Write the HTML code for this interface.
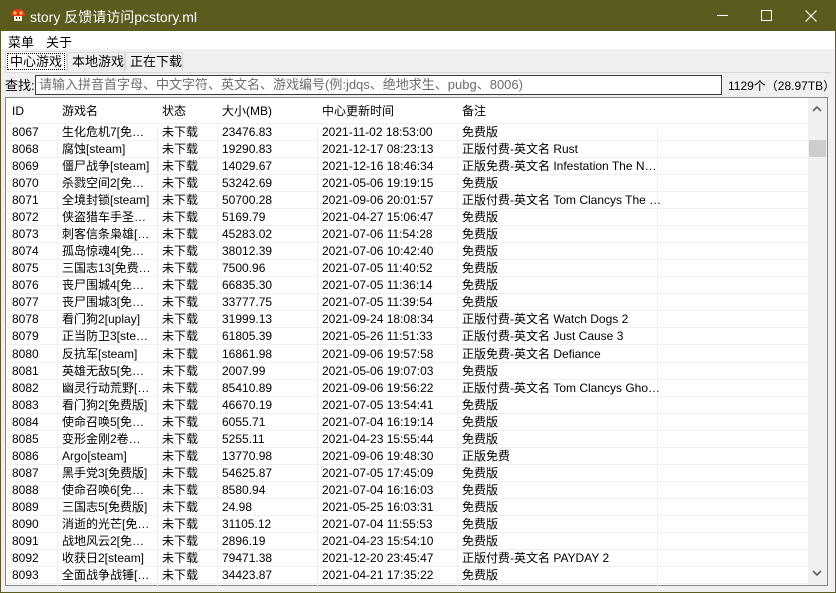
<!DOCTYPE html>
<html><head><meta charset="utf-8"><style>
*{margin:0;padding:0;box-sizing:border-box}
body{width:836px;height:593px;background:#f0f0f0;font-family:"Liberation Sans","Noto Sans CJK SC",sans-serif;font-size:12px;color:#000;position:relative;overflow:hidden}
.abs{position:absolute}
#title{left:0;top:0;width:836px;height:31px;background:#5b5a1f;color:#fff;font-size:14px}
#menu{left:1px;top:31px;width:834px;height:18px;background:#fff}
.tab{top:52px;height:19px;border:1px solid #d9d9d9;border-bottom:none;background:#f0f0f0;font-size:13px;line-height:18px;padding-left:4px;white-space:nowrap;overflow:hidden}
#list{left:5px;top:97px;width:823px;height:489px;background:#fff;border:1px solid #828790}
.r{position:absolute;left:0;width:802px;height:17px;border-bottom:1px solid #f0f0f0;line-height:17px}
.r span{position:absolute;top:0;white-space:nowrap}
.c1{left:6px}.c2{left:56px}.c3{left:156px}.c4{left:216px}.c5{left:316px}.c6{left:456px}
.v{position:absolute;top:0;width:1px;height:488px;background:#f0f0f0}
</style></head><body>
<div class="abs" style="left:0;top:31px;width:1px;height:562px;background:#5b5a1f"></div>
<div class="abs" style="left:835px;top:31px;width:1px;height:562px;background:#5b5a1f"></div>
<div class="abs" style="left:0;top:592px;width:836px;height:1px;background:#5b5a1f"></div>
<div class="abs" id="title">
<svg class="abs" style="left:10px;top:8px" width="16" height="15" viewBox="0 0 16 15"><path d="M1 8 Q1 1 8 1 Q15 1 15 8 Z" fill="#e23a1a"/><circle cx="5" cy="5" r="1.6" fill="#f6c04a"/><circle cx="11" cy="5" r="1.6" fill="#f6c04a"/><rect x="4" y="8" width="8" height="5" fill="#f3ead2"/><rect x="6" y="9" width="1" height="2" fill="#333"/><rect x="9" y="9" width="1" height="2" fill="#333"/></svg>
<div class="abs" style="left:30px;top:7px">story 反馈请访问pcstory.ml</div>
<div class="abs" style="left:717px;top:15px;width:11px;height:1px;background:#fff"></div>
<div class="abs" style="left:761px;top:10px;width:11px;height:11px;border:1px solid #fff"></div>
<svg class="abs" style="left:805px;top:10px" width="12" height="12"><path d="M0.5 0.5 L11.5 11.5 M11.5 0.5 L0.5 11.5" stroke="#fff" stroke-width="1.2"/></svg>
</div>
<div class="abs" id="menu"><span class="abs" style="left:7px;top:1px;font-size:13px">菜单</span><span class="abs" style="left:45px;top:1px;font-size:13px">关于</span></div>
<div class="abs tab" style="left:5px;top:51px;height:21px;width:62px;background:#fff;padding-left:1px;line-height:19px"><span style="border:1px dotted #000;padding:0 2px">中心游戏</span></div>
<div class="abs tab" style="left:67px;width:58px">本地游戏</div>
<div class="abs tab" style="left:125px;width:58px">正在下载</div>
<div class="abs" style="left:5px;top:72px;width:826px;height:1px;background:#d9d9d9"></div>
<div class="abs" style="left:5px;top:75px;font-size:13px">查找:</div>
<div class="abs" style="left:35px;top:75px;width:687px;height:20px;border:1px solid #3c3c3c;background:#fff;color:#6d6d6d;font-size:13px;line-height:17px;padding-left:3px">请输入拼音首字母、中文字符、英文名、游戏编号(例:jdqs、绝地求生、pubg、8006)</div>
<div class="abs" style="left:728px;top:77px">1129个（28.97TB）</div>
<div class="abs" id="list">
<div class="v" style="left:51px"></div><div class="v" style="left:151px"></div><div class="v" style="left:211px"></div><div class="v" style="left:311px"></div><div class="v" style="left:451px"></div><div class="v" style="left:651px"></div>
<div class="r" style="top:0;height:26px;line-height:26px;background:#fff"><span class="c1">ID</span><span class="c2">游戏名</span><span class="c3">状态</span><span class="c4">大小(MB)</span><span class="c5">中心更新时间</span><span class="c6">备注</span></div>
<div id="rows"></div>
<div class="abs" style="left:802px;top:0;width:19px;height:487px;background:#f0f0f0"></div>
<svg class="abs" style="left:806px;top:8px" width="10" height="6"><path d="M1 5 L5 1 L9 5" stroke="#606060" stroke-width="1.6" fill="none"/></svg>
<div class="abs" style="left:803px;top:42px;width:17px;height:17px;background:#cdcdcd"></div>
<svg class="abs" style="left:806px;top:472px" width="10" height="6"><path d="M1 1 L5 5 L9 1" stroke="#606060" stroke-width="1.6" fill="none"/></svg>
</div>
<script>
var d=[
["8067","生化危机7[免…","23476.83","2021-11-02 18:53:00","免费版"],
["8068","腐蚀[steam]","19290.83","2021-12-17 08:23:13","正版付费-英文名 Rust"],
["8069","僵尸战争[steam]","14029.67","2021-12-16 18:46:34","正版免费-英文名 Infestation The N…"],
["8070","杀戮空间2[免…","53242.69","2021-05-06 19:19:15","免费版"],
["8071","全境封锁[steam]","50700.28","2021-09-06 20:01:57","正版付费-英文名 Tom Clancys The …"],
["8072","侠盗猎车手圣…","5169.79","2021-04-27 15:06:47","免费版"],
["8073","刺客信条枭雄[…","45283.02","2021-07-06 11:54:28","免费版"],
["8074","孤岛惊魂4[免…","38012.39","2021-07-06 10:42:40","免费版"],
["8075","三国志13[免费…","7500.96","2021-07-05 11:40:52","免费版"],
["8076","丧尸围城4[免…","66835.30","2021-07-05 11:36:14","免费版"],
["8077","丧尸围城3[免…","33777.75","2021-07-05 11:39:54","免费版"],
["8078","看门狗2[uplay]","31999.13","2021-09-24 18:08:34","正版付费-英文名 Watch Dogs 2"],
["8079","正当防卫3[ste…","61805.39","2021-05-26 11:51:33","正版付费-英文名 Just Cause 3"],
["8080","反抗军[steam]","16861.98","2021-09-06 19:57:58","正版免费-英文名 Defiance"],
["8081","英雄无敌5[免…","2007.99","2021-05-06 19:07:03","免费版"],
["8082","幽灵行动荒野[…","85410.89","2021-09-06 19:56:22","正版付费-英文名 Tom Clancys Gho…"],
["8083","看门狗2[免费版]","46670.19","2021-07-05 13:54:41","免费版"],
["8084","使命召唤5[免…","6055.71","2021-07-04 16:19:14","免费版"],
["8085","变形金刚2卷…","5255.11","2021-04-23 15:55:44","免费版"],
["8086","Argo[steam]","13770.98","2021-09-06 19:48:30","正版免费"],
["8087","黑手党3[免费版]","54625.87","2021-07-05 17:45:09","免费版"],
["8088","使命召唤6[免…","8580.94","2021-07-04 16:16:03","免费版"],
["8089","三国志5[免费版]","24.98","2021-05-25 16:03:31","免费版"],
["8090","消逝的光芒[免…","31105.12","2021-07-04 11:55:53","免费版"],
["8091","战地风云2[免…","2896.19","2021-04-23 15:54:10","免费版"],
["8092","收获日2[steam]","79471.38","2021-12-20 23:45:47","正版付费-英文名 PAYDAY 2"],
["8093","全面战争战锤[…","34423.87","2021-04-21 17:35:22","免费版"]];
var h="";d.forEach(function(r,i){h+='<div class="r" style="top:'+(26+Math.round(i*17.04))+'px"><span class="c1">'+r[0]+'</span><span class="c2">'+r[1]+'</span><span class="c3">未下载</span><span class="c4">'+r[2]+'</span><span class="c5">'+r[3]+'</span><span class="c6">'+r[4]+'</span></div>'});
document.getElementById("rows").innerHTML=h;
</script>
</body></html>
